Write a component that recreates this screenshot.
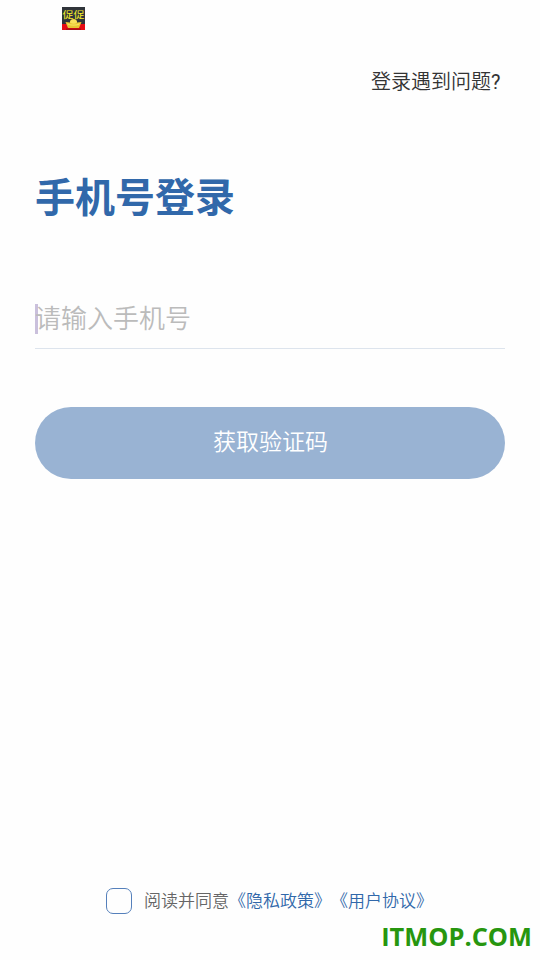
<main>
  <header>
    <svg class="logo" width="23" height="23" viewBox="0 0 23 23" aria-hidden="true">
      <rect width="23" height="23" fill="#30343a" />
      <path d="M0 17h23v6H0z" fill="#e60b13" />
      <path d="M4 21.5h15V23H4z" fill="#a51213" />
      <path d="M3.5 15l4.5.5q0-3.5 3.5-3.5t3.5 3.5l4.5-.5-2.5 6H6z" fill="#e8c832" />
      <path d="M8 15.5q0-3 3.5-3t3.5 3q-3.5 2.5-7 0zM5 16q6.500 3 13 0l-1 2q-5.500 1.500-11 0z" fill="#f8e35b" />
      <text x="0.5" y="10.500" textLength="22" lengthAdjust="spacingAndGlyphs">促促</text>
    </svg>
    <a class="help" href="#help">登录遇到问题<span>?</span></a>
  </header>
  <h1>手机号登录</h1>
  <div class="field"><i></i><span>请输入手机号</span></div>
  <button>获取验证码</button>
  <footer>
    <label><span class="box"></span><span class="terms">阅读并同意<b>《隐私政策》《用户协议》</b></span></label>
    <div class="mark">ITMOP.COM</div>
  </footer>
</main>

<style>
  :global(body) { background: #fefefe; }
  main { box-sizing: border-box; height: 960px; padding: 0 35px; display: flex; flex-direction: column; font-family: Roboto, "Noto Sans CJK SC", sans-serif; font-weight: 350; }
  header { height: 96px; padding: 7px 4.500px 0 27px; box-sizing: border-box; display: flex; justify-content: space-between; flex: none; }
  .logo text { font: 400 9.500px "Noto Sans CJK SC", sans-serif; fill: #f7f02b; }
  .help { margin-top: 60px; font-size: 20px; line-height: 30px; color: #333; text-decoration: none; }
  .help span { font-weight: 400; }
  h1 { margin: 73px 0 0; font-size: 40px; line-height: 60px; font-weight: 700; color: #3168aa; }
  .field { margin-top: 59px; height: 60px; border-bottom: 1px solid #dde4ed; display: flex; font-size: 26px; line-height: 62px; color: #bbb; }
  .field i { width: 3px; height: 30px; margin: 16px -3px 0 0; background: #cac0dc; }
  button { margin-top: 58px; height: 72px; border: 0; border-radius: 36px; background: #99b3d3; color: white; font: 350 23px/70px Roboto, "Noto Sans CJK SC", sans-serif; padding: 0 0 0 1px; }
  footer { margin-top: auto; height: 73px; }
  label { display: flex; margin-left: 71px; font-size: 17px; line-height: 28px; height: 27px; color: #666; white-space: nowrap; text-spacing-trim: space-all; }
  .box { box-sizing: border-box; width: 26px; height: 26px; margin-right: 12px; margin-top: 1px; border: 1px solid #5580bb; border-radius: 7px; }
  b { font-weight: inherit; color: #3168aa; }
  .mark { margin: 4px -27px 0 0; text-align: right; font: bold 25.400px/36px "Open Sans", sans-serif; color: #27960f; }
</style>
